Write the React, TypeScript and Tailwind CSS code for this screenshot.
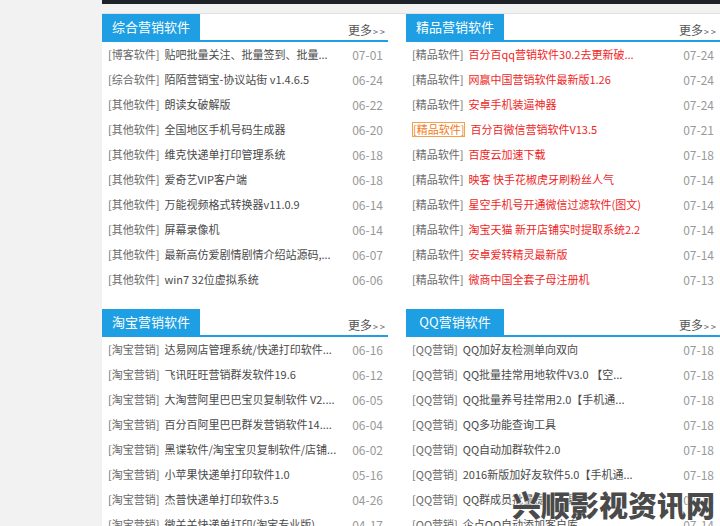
import React from "react"

type Item = { tag: string; title: string; date: string; hot?: boolean; focus?: boolean }

const font = { fontFamily: '"Noto Sans CJK SC", "Noto Sans", sans-serif' }

const general: Item[] = [
  { tag: "[博客软件]", title: "贴吧批量关注、批量签到、批量...", date: "07-01" },
  { tag: "[综合软件]", title: "陌陌营销宝-协议站街 v1.4.6.5", date: "06-24" },
  { tag: "[其他软件]", title: "朗读女破解版", date: "06-22" },
  { tag: "[其他软件]", title: "全国地区手机号码生成器", date: "06-20" },
  { tag: "[其他软件]", title: "维克快递单打印管理系统", date: "06-18" },
  { tag: "[其他软件]", title: "爱奇艺VIP客户端", date: "06-18" },
  { tag: "[其他软件]", title: "万能视频格式转换器v11.0.9", date: "06-14" },
  { tag: "[其他软件]", title: "屏幕录像机", date: "06-14" },
  { tag: "[其他软件]", title: "最新高仿爱剧情剧情介绍站源码,...", date: "06-07" },
  { tag: "[其他软件]", title: "win7 32位虚拟系统", date: "06-06" },
]

const featured: Item[] = [
  { tag: "[精品软件]", title: "百分百qq营销软件30.2去更新破...", date: "07-24", hot: true },
  { tag: "[精品软件]", title: "网赢中国营销软件最新版1.26", date: "07-24", hot: true },
  { tag: "[精品软件]", title: "安卓手机装逼神器", date: "07-24", hot: true },
  { tag: "[精品软件]", title: "百分百微信营销软件V13.5", date: "07-21", hot: true, focus: true },
  { tag: "[精品软件]", title: "百度云加速下载", date: "07-18", hot: true },
  { tag: "[精品软件]", title: "映客 快手花椒虎牙刷粉丝人气", date: "07-14", hot: true },
  { tag: "[精品软件]", title: "星空手机号开通微信过滤软件(图文)", date: "07-14", hot: true },
  { tag: "[精品软件]", title: "淘宝天猫 新开店铺实时提取系统2.2", date: "07-14", hot: true },
  { tag: "[精品软件]", title: "安卓爱转精灵最新版", date: "07-14", hot: true },
  { tag: "[精品软件]", title: "微商中国全套子母注册机", date: "07-13", hot: true },
]

const taobao: Item[] = [
  { tag: "[淘宝营销]", title: "达易网店管理系统/快递打印软件...", date: "06-16" },
  { tag: "[淘宝营销]", title: "飞讯旺旺营销群发软件19.6", date: "06-12" },
  { tag: "[淘宝营销]", title: "大淘营阿里巴巴宝贝复制软件 V2....", date: "06-05" },
  { tag: "[淘宝营销]", title: "百分百阿里巴巴群发营销软件14....", date: "06-04" },
  { tag: "[淘宝营销]", title: "黑谍软件/淘宝宝贝复制软件/店铺...", date: "06-02" },
  { tag: "[淘宝营销]", title: "小苹果快递单打印软件1.0", date: "05-16" },
  { tag: "[淘宝营销]", title: "杰普快递单打印软件3.5", date: "04-26" },
  { tag: "[淘宝营销]", title: "微关关快递单打印(淘宝专业版)", date: "04-17" },
]

const qq: Item[] = [
  { tag: "[QQ营销]", title: "QQ加好友检测单向双向", date: "07-18" },
  { tag: "[QQ营销]", title: "QQ批量挂常用地软件V3.0 【空...", date: "07-18" },
  { tag: "[QQ营销]", title: "QQ批量养号挂常用2.0【手机通...", date: "07-18" },
  { tag: "[QQ营销]", title: "QQ多功能查询工具", date: "07-18" },
  { tag: "[QQ营销]", title: "QQ自动加群软件2.0", date: "07-18" },
  { tag: "[QQ营销]", title: "2016新版加好友软件5.0【手机通...", date: "07-18" },
  { tag: "[QQ营销]", title: "QQ群成员批量提取工具", date: "07-18" },
  { tag: "[QQ营销]", title: "企点QQ自动添加客户库", date: "07-14" },
]

function Section({ title, items, wide }: { title: string; items: Item[]; wide?: boolean }) {
  return (
    <div className={wide ? "min-w-0 flex-1" : "w-[286px] shrink-0"}>
      <div className="flex h-[28px] items-end justify-between border-b-2 border-[#1e9fe3]">
        <div className="flex h-[26px] w-[98px] items-center justify-center bg-[#1e9fe3] text-[13px] text-white">
          {title}
        </div>
        <div className={`flex items-baseline text-[12px] leading-[16px] text-[#555] ${wide ? "pr-[2px]" : "pr-[1px]"}`}>
          更多<span className="pl-[1px] text-[9px] tracking-[2px]">&gt;&gt;</span>
        </div>
      </div>
      <ul>
        {items.map((it, i) => (
          <li
            key={i}
            className={`flex h-[25px] items-center justify-between pl-[6px] text-[11px] ${wide ? "pr-[6px]" : "pr-[5px]"}`}
          >
            <div className="flex min-w-0 items-center gap-[5px] whitespace-nowrap">
              <span
                className={
                  it.focus
                    ? "border border-[#f5a04a] leading-[13px] text-[#f07a1a]"
                    : "text-[#6a6a6a]"
                }
              >
                {it.tag}
              </span>
              <span className={it.hot ? "text-[#f01e1e]" : "text-[#4a4a4a]"}>{it.title}</span>
            </div>
            <span className="shrink-0 text-[12px] text-[#999]">{it.date}</span>
          </li>
        ))}
      </ul>
    </div>
  )
}

export default function App() {
  return (
    <div className="relative flex h-[526px] w-[720px] overflow-hidden bg-[#f2f2f2]" style={font}>
      <div className="w-[102px] shrink-0" />
      <div className="flex min-w-0 flex-1 flex-col">
        <div className="h-[4px] shrink-0 bg-[#1e2127]" />
        <div className="h-[9px] shrink-0" />
        <div className="flex-1 shrink-0 border-t border-[#e0e0e0] bg-white">
          <div className="flex gap-[18px]">
            <Section title="综合营销软件" items={general} />
            <Section title="精品营销软件" items={featured} wide />
          </div>
          <div className="mt-[17px] flex gap-[18px]">
            <Section title="淘宝营销软件" items={taobao} />
            <Section title="QQ营销软件" items={qq} wide />
          </div>
        </div>
      </div>
      <div
        className="absolute left-[512px] top-[490px] whitespace-nowrap text-[29px] font-black leading-none text-[#4a4a4a]"
        style={{ textShadow: "0 0 2px #fff, 0 0 2px #fff" }}
      >
        兴顺影视资讯网
      </div>
    </div>
  )
}
